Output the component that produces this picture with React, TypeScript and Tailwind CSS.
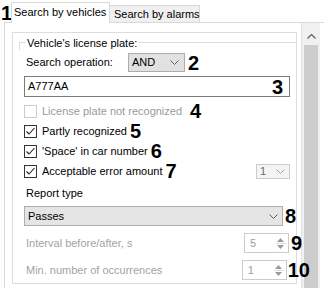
import React from "react";

const Num = ({ n, className = "" }: { n: string; className?: string }) => (
  <span className={`relative z-10 font-bold text-[20px] leading-none text-black ${className}`}>{n}</span>
);

const Chevron = ({ color = "#606060" }: { color?: string }) => (
  <svg width="9" height="5" viewBox="0 0 9 5" fill="none">
    <polyline points="0.5,0.5 4.5,4.5 8.5,0.5" stroke={color} strokeWidth="1" />
  </svg>
);

const Check = ({ on, disabled }: { on?: boolean; disabled?: boolean }) => (
  <div
    className={`w-[13px] h-[13px] shrink-0 border bg-white flex items-center justify-center ${
      disabled ? "border-[#cccccc]" : "border-[#333333]"
    }`}
  >
    {on && (
      <svg width="11" height="11" viewBox="0 0 11 11" fill="none">
        <polyline points="1.5,5.5 4,8 9.5,2" stroke="#222" strokeWidth="1.1" />
      </svg>
    )}
  </div>
);

const Spin = ({ value }: { value: string }) => (
  <div className="w-[45px] h-[20px] border border-[#cccccc] bg-white flex items-center justify-between pl-[5px] pr-[2px]">
    <span className="text-[#a0a0a0]">{value}</span>
    <div className="flex flex-col items-center w-[10px] gap-[1px]">
      <svg width="7" height="4" viewBox="0 0 7 4">
        <polygon points="0,4 3.5,0 7,4" fill="#9a9a9a" />
      </svg>
      <div className="w-[10px] h-px bg-[#dddddd]" />
      <svg width="7" height="4" viewBox="0 0 7 4">
        <polygon points="0,0 3.5,4 7,0" fill="#9a9a9a" />
      </svg>
    </div>
  </div>
);

export default function App() {
  return (
    <div
      className="w-[324px] h-[288px] bg-white overflow-hidden relative text-[11px] text-black"
      style={{ fontFamily: '"Liberation Sans", Arial, sans-serif' }}
    >
      {/* tabs */}
      <div className="h-[22px] flex items-end pl-[11px] relative">
        <span className="absolute left-[1px] top-[3px] font-bold text-[20px] leading-none">1</span>
        <div className="h-[21px] w-[99px] border border-b-0 border-[#d9d9d9] bg-white pl-[2px] leading-[19px] whitespace-nowrap relative z-10 -mb-px">
          Search by vehicles
        </div>
        <div className="h-[17px] w-[90px] border border-l-0 border-b-0 border-[#d9d9d9] bg-[#f0f0f0] pl-[4px] leading-[16px] whitespace-nowrap">
          Search by alarms
        </div>
      </div>

      <div className="flex h-[266px] ml-[4px] border-l border-t border-[#d9d9d9]">
        <div className="pl-[7px] pt-[9px]">
          <div className="w-[285px] h-[252px] border border-[#dcdcdc] flex flex-col">
            {/* legend */}
            <div className="flex items-start h-[14px] mt-[3px] pl-[6px]">
              <div className="w-[6px] h-[8px] mt-[6px] border-t border-l border-[#dcdcdc]" />
              <span className="px-[2px] leading-[14px]">Vehicle's license plate:</span>
              <div className="flex-1 mt-[6px] border-t border-[#dcdcdc]" />
            </div>

            <div className="pl-[11px] flex flex-col">
              {/* search operation */}
              <div className="flex items-center h-[19px] mt-[3px]">
                <span className="w-[104px] pl-[2px]">Search operation:</span>
                <div className="w-[57px] h-[19px] bg-[#e1e1e1] border border-[#adadad] flex items-center justify-between pl-[3px] pr-[5px]">
                  <span>AND</span>
                  <Chevron />
                </div>
                <Num n="2" className="ml-[3px]" />
              </div>

              {/* plate input */}
              <div className="w-[266px] h-[21px] mt-[4px] border border-[#7a7a7a] bg-white flex items-center justify-between pl-[3px] pr-[6px]">
                <span>A777AA</span>
                <Num n="3" />
              </div>

              {/* checkboxes */}
              <div className="flex items-center h-[20px] mt-[4px]">
                <Check disabled />
                <span className="ml-[5px] text-[#9a9a9a]">License plate not recognized</span>
                <Num n="4" className="ml-[8px]" />
              </div>
              <div className="flex items-center h-[20px]">
                <Check on />
                <span className="ml-[5px]">Partly recognized</span>
                <Num n="5" className="ml-[3px]" />
              </div>
              <div className="flex items-center h-[20px]">
                <Check on />
                <span className="ml-[5px]">'Space' in car number</span>
                <Num n="6" className="ml-[3px]" />
              </div>
              <div className="flex items-center h-[20px] w-[266px]">
                <Check on />
                <span className="ml-[5px]">Acceptable error amount</span>
                <Num n="7" className="ml-[3px]" />
                <div className="ml-auto w-[34px] h-[15px] border border-[#cccccc] bg-[#f4f4f4] flex items-center justify-between pl-[3px] pr-[4px]">
                  <span className="text-[#6a6a6a]">1</span>
                  <Chevron color="#a0a0a0" />
                </div>
              </div>

              {/* report type */}
              <div className="h-[20px] flex items-center mt-[2px] pl-[2px]">Report type</div>
              <div className="flex items-center mt-[3px]">
                <div className="w-[266px] h-[20px] bg-[#e5e5e5] border border-[#adadad] flex items-center justify-between pl-[3px] pr-[4px]">
                  <span>Passes</span>
                  <Chevron />
                </div>
                <Num n="8" className="ml-[2px]" />
              </div>

              <div className="flex items-center w-[266px] mt-[7px] h-[20px]">
                <span className="pl-[2px] text-[#a3a3a3]">Interval before/after, s</span>
                <div className="ml-auto">
                  <Spin value="5" />
                </div>
                <Num n="9" className="ml-[2px] -mr-[12px]" />
              </div>
              <div className="flex items-center w-[266px] mt-[7px] h-[20px]">
                <span className="pl-[2px] text-[#a3a3a3]">Min. number of occurrences</span>
                <div className="ml-auto">
                  <Spin value="1" />
                </div>
                <Num n="10" className="ml-[1px] -mr-[20px] text-[19px]" />
              </div>
            </div>
          </div>
        </div>

        {/* scrollbar */}
        <div className="ml-[4px] w-[19px] border-l border-[#e3e3e3] bg-[#f0f0f0] flex flex-col items-center">
          <div className="h-[18px] w-full flex items-center justify-center mt-[4px]">
            <svg width="9" height="5" viewBox="0 0 9 5" fill="none">
              <polyline points="0.5,4.5 4.5,0.5 8.5,4.5" stroke="#606060" strokeWidth="1.2" />
            </svg>
          </div>
          <div className="w-[14px] flex-1 bg-[#cdcdcd]" />
        </div>
      </div>
    </div>
  );
}
